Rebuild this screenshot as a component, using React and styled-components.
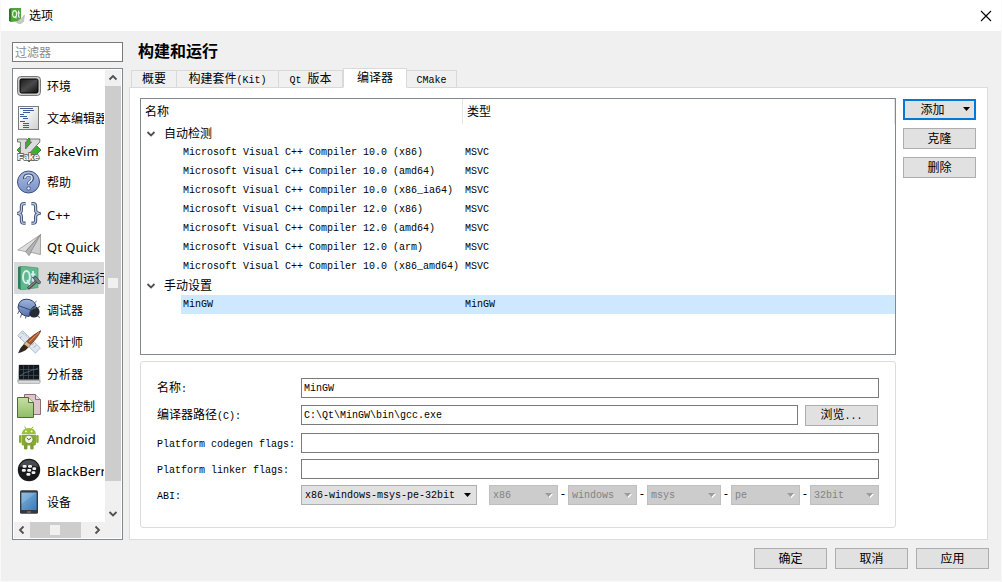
import { Fragment, useState } from "react";
import styled, { createGlobalStyle, css } from "styled-components";

const BUILD_TABS = [
  { id: "overview", label: "概要", width: 46 },
  { id: "kits", label: "构建套件", latinAfter: "(Kit)", width: 102 },
  { id: "versions", latinBefore: "Qt ", label: "版本", width: 64 },
  { id: "compilers", label: "编译器", width: 64 },
  { id: "cmake", latinBefore: "CMake", label: "", width: 50 },
];

const TOOLCHAINS = [
  {
    group: "自动检测",
    items: [
      { id: 1, name: "Microsoft Visual C++ Compiler 10.0 (x86)", type: "MSVC" },
      { id: 2, name: "Microsoft Visual C++ Compiler 10.0 (amd64)", type: "MSVC" },
      { id: 3, name: "Microsoft Visual C++ Compiler 10.0 (x86_ia64)", type: "MSVC" },
      { id: 4, name: "Microsoft Visual C++ Compiler 12.0 (x86)", type: "MSVC" },
      { id: 5, name: "Microsoft Visual C++ Compiler 12.0 (amd64)", type: "MSVC" },
      { id: 6, name: "Microsoft Visual C++ Compiler 12.0 (arm)", type: "MSVC" },
      { id: 7, name: "Microsoft Visual C++ Compiler 10.0 (x86_amd64)", type: "MSVC" },
    ],
  },
  {
    group: "手动设置",
    items: [{ id: 8, name: "MinGW", type: "MinGW" }],
  },
];

const ABI_PARTS = [
  { label: "arch", value: "x86" },
  { label: "os", value: "windows" },
  { label: "flavor", value: "msys" },
  { label: "format", value: "pe" },
  { label: "width", value: "32bit" },
];

function QtLogo() {
  return (
    <svg width="16" height="16" viewBox="0 0 16 16" aria-hidden="true">
      <path d="M0 1 L2 0 V14 L0 13 Z" fill="#2b7a1e" />
      <path d="M2 0 H12 V13 L2 14 Z" fill="#4fa53a" />
      <ellipse cx="5.6" cy="6" rx="2" ry="3.4" fill="none" stroke="#e8f5e2" strokeWidth="1.2" />
      <path d="M6 8 L7.4 10.4 M9.6 2.6 V8.4 Q9.6 9.4 10.8 9 M8.4 5 H11" fill="none" stroke="#e8f5e2" strokeWidth="1.1" />
      <path d="M15.5 7 L14.6 13.6 L11 16 L7.6 14.6 L10 11.4 L13 10 Z" fill="#c9c9c9" stroke="#a5a5a5" strokeWidth="0.5" />
    </svg>
  );
}

function EnvironmentIcon() {
  return (
    <>
      <defs>
        <linearGradient id="env" x1="0" y1="0" x2="1" y2="1">
          <stop offset="0" stopColor="#1a1a1a" />
          <stop offset="0.5" stopColor="#4a4a4a" />
          <stop offset="1" stopColor="#111" />
        </linearGradient>
      </defs>
      <rect x="0.6" y="2.6" width="22.8" height="18.8" rx="3" fill="#d4d4d2" stroke="#6d6d6d" />
      <rect x="3" y="5" width="18" height="14" rx="1.5" fill="url(#env)" stroke="#000" />
    </>
  );
}

function EditorIcon() {
  return (
    <>
      <defs>
        <linearGradient id="doc" x1="0" y1="0" x2="1" y2="1">
          <stop offset="0.3" stopColor="#f8f9fa" />
          <stop offset="1" stopColor="#cfcfcf" />
        </linearGradient>
      </defs>
      <rect x="1.5" y="0.5" width="20" height="23" fill="url(#doc)" stroke="#7b7b7b" />
      <path
        d="M3 2.5h13M6 4.5h11M6 6.5h7M3 8.5h4M3 10.5h7M6 12.5h5M3 15.5h5M6 17.5h6M6 19.5h6M6 21.5h6"
        stroke="#3d5b94"
        fill="none"
      />
    </>
  );
}

function FakeVimIcon() {
  return (
    <>
      <path d="M12 0 L24 12 L12 24 L0 12 Z" fill="#3fb02c" stroke="#1f7a16" strokeWidth="0.8" />
      <path
        d="M0.5 1 H10 V4 H8.6 V11 L14.6 4 H13 V1 H22.8 V4 L9.5 18.5 H3.4 V4 H0.5 Z"
        fill="#dcdcdc"
        stroke="#6a6a6a"
        strokeWidth="0.9"
      />
      <text
        x="0.5"
        y="21.5"
        fontFamily="Liberation Sans, sans-serif"
        fontSize="9.5"
        fontWeight="700"
        fill="#fff"
        stroke="#6b6b6b"
        strokeWidth="1.8"
        paintOrder="stroke"
      >
        Fake
      </text>
    </>
  );
}

function HelpIcon() {
  return (
    <>
      <defs>
        <linearGradient id="help" x1="0" y1="0" x2="0" y2="1">
          <stop offset="0" stopColor="#a9bbe0" />
          <stop offset="1" stopColor="#7791c8" />
        </linearGradient>
      </defs>
      <circle cx="11.5" cy="12" r="11" fill="url(#help)" stroke="#3d4f7c" />
      <path
        d="M7.6 9 Q7.4 5 11.6 5 Q15.6 5 15.4 8.6 Q15.2 10.6 12.8 11.8 Q11.6 12.6 11.6 14.6"
        fill="none"
        stroke="#34476f"
        strokeWidth="3.2"
      />
      <path
        d="M7.8 8.6 Q7.8 5.2 11.6 5.2 Q15.2 5.2 15 8.6 Q14.8 10.4 12.6 11.6 Q11.6 12.4 11.6 14.2"
        fill="none"
        stroke="#e6ebf7"
        strokeWidth="1.6"
      />
      <circle cx="11.6" cy="18.4" r="1.7" fill="#e6ebf7" stroke="#34476f" strokeWidth="0.8" />
    </>
  );
}

function CppIcon() {
  const braces =
    "M8.6 1.6 H7 Q4.4 1.6 4.4 4.4 V8 Q4.4 10.6 1.4 11.4 Q4.4 12.2 4.4 14.8 V18.4 Q4.4 21.2 7 21.2 H8.6 M14.4 1.6 H16 Q18.6 1.6 18.6 4.4 V8 Q18.6 10.6 21.6 11.4 Q18.6 12.2 18.6 14.8 V18.4 Q18.6 21.2 16 21.2 H14.4";
  return (
    <>
      <path d={braces} fill="none" stroke="#465a7c" strokeWidth="3.2" />
      <path d={braces} fill="none" stroke="#c3d0e6" strokeWidth="1.1" />
    </>
  );
}

function QuickIcon() {
  return (
    <>
      <path d="M23.6 0.6 L0.8 16 L8.6 17.6 Z" fill="#dedede" stroke="#8e8e8e" strokeWidth="0.7" />
      <path d="M23.6 0.6 L8.6 17.6 L12 21.6 L14 18.4 Z" fill="#b4b4b4" stroke="#7d7d7d" strokeWidth="0.7" />
      <path d="M23.6 0.6 L13.6 18.2 L23.4 20.6 Z" fill="#cfcfcf" stroke="#888" strokeWidth="0.7" />
    </>
  );
}

function BuildIcon() {
  return (
    <>
      <path d="M1 1 L4 0 V24 L1 22.6 Z" fill="#2f7d5b" />
      <path d="M3.6 0 L21 2 V21.6 L3.6 24 Z" fill="#5fb98b" stroke="#3e9069" strokeWidth="0.6" />
      <ellipse cx="9.4" cy="11" rx="3.4" ry="6" fill="none" stroke="#d9eef2" strokeWidth="2" />
      <path d="M10 14 L13 19 M16 5 V14 Q16 16 18 15.6 M14 8.4 H18.4" stroke="#d9eef2" strokeWidth="1.8" fill="none" />
      <path d="M11 22.6 L20 14.6" stroke="#4b3c44" strokeWidth="2.8" />
      <path d="M11.4 22 L19.6 14.8" stroke="#94828a" strokeWidth="1.2" />
      <path d="M15.4 11.4 L19 10.6 L24 16.4 L22.4 18 L19.8 16.6 L17.4 13.6 Z" fill="#72838e" stroke="#37444c" strokeWidth="0.8" />
    </>
  );
}

function DebuggerIcon() {
  return (
    <>
      <defs>
        <linearGradient id="bug" x1="0" y1="0" x2="0" y2="1">
          <stop offset="0" stopColor="#9fb4de" />
          <stop offset="1" stopColor="#5872ac" />
        </linearGradient>
      </defs>
      <path
        d="M2 13 L0.6 16 M4.6 16 L3.4 19.6 M9 18 L8.6 20.6 M17.4 5 L19.6 3 M21 9.6 L23 8.4 M20.4 18 L23 19.6"
        stroke="#4a525e"
        strokeWidth="0.9"
        fill="none"
      />
      <ellipse cx="17" cy="13.8" rx="5.6" ry="5.8" fill="#262c36" />
      <path
        d="M1 9.6 Q1.6 1.2 9.6 1.2 Q16.6 1.4 19 7.4 Q12.6 9.4 12.2 18.4 Q3.4 18.4 1 9.6 Z"
        fill="url(#bug)"
        stroke="#2d4069"
      />
      <path d="M1.4 7.6 L13.4 12" stroke="#2d4069" strokeWidth="0.9" />
      <path d="M14.4 12 Q16 9.4 19 9.8" stroke="#7c8694" strokeWidth="1" fill="none" />
    </>
  );
}

function DesignerIcon() {
  return (
    <>
      <path d="M0.6 5.6 L5.6 0.6 L23.4 18 L18.4 23.2 Z" fill="#dde5ee" stroke="#a5b2c2" strokeWidth="0.8" />
      <path
        d="M5 2.6 L6.8 4.4 M8.4 5 L9.6 6.2 M11 7.4 L12.6 9 M14.6 15 L16.6 13 M17 17.4 L19 15.4 M3 8 L4.4 6.6"
        stroke="#8494aa"
        strokeWidth="0.8"
      />
      <path d="M23.8 0.6 Q22 6 13.6 14.6 L9.4 11.4 Q17 4 23.8 0.6 Z" fill="#a9562c" stroke="#5a2b14" strokeWidth="0.7" />
      <path d="M22 2.4 L12 12" stroke="#e39a68" strokeWidth="1" />
      <path d="M9.4 11.4 L13.6 14.6 L11.2 17.6 L6.8 14.2 Z" fill="#d8b890" stroke="#6a5131" strokeWidth="0.6" />
      <path d="M6.8 14.2 L11.2 17.6 Q8 22 1 23.2 Q3 17.4 6.8 14.2 Z" fill="#33261c" />
    </>
  );
}

function AnalyzerIcon() {
  return (
    <>
      <path d="M2 3 H22 L23 20 H1 Z" fill="#c9cbcd" stroke="#96999c" strokeWidth="0.7" />
      <rect x="2" y="3" width="20" height="14.6" fill="#14181c" />
      <path d="M2.4 7.5h19M2.4 13.5h19M6.5 3.4v14M11.5 3.4v14M16.5 3.4v14" stroke="#44606b" strokeWidth="0.6" />
      <path d="M3 14 L8 10.6 L12 9.6 L15 8 L18 7.6 L21 6" fill="none" stroke="#4d7380" strokeWidth="0.8" />
      <path d="M1 18.4 H23 V20.6 Q23 21.4 22 21.4 H2 Q1 21.4 1 20.6 Z" fill="#d9dadb" stroke="#8b8e90" strokeWidth="0.6" />
    </>
  );
}

function VersionIcon() {
  return (
    <>
      <defs>
        <linearGradient id="vcs" x1="0" y1="0" x2="0" y2="1">
          <stop offset="0" stopColor="#c8dfa4" />
          <stop offset="1" stopColor="#8fbd68" />
        </linearGradient>
      </defs>
      <path d="M7.5 0.5 H18.5 L23.5 5.5 V20.5 H7.5 Z" fill="#dcc6cb" stroke="#8b6f76" />
      <path d="M18.5 0.5 V5.5 H23.5" fill="#efe1e4" stroke="#8b6f76" />
      <path d="M0.5 3.5 H11.5 L16.5 8.5 V23.5 H0.5 Z" fill="url(#vcs)" stroke="#4e6b36" />
      <path d="M11.5 3.5 V8.5 H16.5" fill="#e3f0cf" stroke="#4e6b36" />
    </>
  );
}

function AndroidIcon() {
  return (
    <>
      <path d="M7.6 0.6 L9.2 3 M16 0.6 L14.4 3" stroke="#8fb52c" strokeWidth="1" />
      <path d="M4.6 8 Q5.4 2 11.8 2 Q18.2 2 19 8 Z" fill="#9bc03a" />
      <circle cx="9" cy="5.4" r="0.9" fill="#fff" />
      <circle cx="14.6" cy="5.4" r="0.9" fill="#fff" />
      <path d="M4.6 8.8 H19 V18 Q19 19.4 17.6 19.4 H6 Q4.6 19.4 4.6 18 Z" fill="#86ab2f" />
      <rect x="2" y="9" width="2.4" height="8" rx="1.2" fill="#86ab2f" />
      <rect x="19.2" y="9" width="2.4" height="8" rx="1.2" fill="#86ab2f" />
      <rect x="7" y="18" width="3.4" height="5.6" rx="1.4" fill="#7d9e34" />
      <rect x="13.2" y="18" width="3.4" height="5.6" rx="1.4" fill="#7d9e34" />
      <circle cx="11.8" cy="13.4" r="4.2" fill="#eef3e2" stroke="#5f7d22" strokeWidth="0.7" />
      <path d="M9.8 12 L11.8 13.8 L14.2 11.8" stroke="#4e5b3a" strokeWidth="1" fill="none" />
    </>
  );
}

function BlackBerryIcon() {
  return (
    <>
      <circle cx="12" cy="12" r="11.2" fill="#17191b" />
      <path d="M2.4 9 Q5 2 12 2 Q19 2 21.6 9 Q12 6 2.4 9 Z" fill="#4a4d50" />
      <g fill="#f2f2f2">
        <rect x="5.6" y="7" width="4" height="2.8" rx="1.2" />
        <rect x="11" y="7" width="4" height="2.8" rx="1.2" />
        <rect x="4.8" y="11" width="4" height="2.8" rx="1.2" />
        <rect x="10.2" y="11" width="4" height="2.8" rx="1.2" />
        <rect x="15.4" y="9.2" width="3.8" height="2.8" rx="1.2" />
        <rect x="14.6" y="13.2" width="3.8" height="2.8" rx="1.2" />
        <rect x="9.4" y="15" width="4" height="2.8" rx="1.2" />
      </g>
    </>
  );
}

function DeviceIcon() {
  return (
    <>
      <defs>
        <linearGradient id="dev" x1="0" y1="0" x2="1" y2="1">
          <stop offset="0" stopColor="#7fb2dc" />
          <stop offset="0.5" stopColor="#5b97cb" />
          <stop offset="1" stopColor="#3f7cb4" />
        </linearGradient>
      </defs>
      <rect x="3" y="0.2" width="18" height="23.6" rx="1.6" fill="#33393f" />
      <rect x="4.4" y="2.6" width="15.2" height="17.4" fill="url(#dev)" />
      <path d="M4.4 2.6 H19.6 L4.4 14 Z" fill="#ffffff" opacity="0.15" />
      <path d="M10 22 H14" stroke="#9aa1a8" strokeWidth="0.8" />
    </>
  );
}

const CATEGORIES = [
  { id: "env", label: "环境", Icon: EnvironmentIcon },
  { id: "editor", label: "文本编辑器", Icon: EditorIcon },
  { id: "fakevim", label: "FakeVim", latin: true, Icon: FakeVimIcon },
  { id: "help", label: "帮助", Icon: HelpIcon },
  { id: "cpp", label: "C++", latin: true, Icon: CppIcon },
  { id: "quick", label: "Qt Quick", latin: true, Icon: QuickIcon },
  { id: "build", label: "构建和运行", Icon: BuildIcon },
  { id: "debugger", label: "调试器", Icon: DebuggerIcon },
  { id: "designer", label: "设计师", Icon: DesignerIcon },
  { id: "analyzer", label: "分析器", Icon: AnalyzerIcon },
  { id: "vcs", label: "版本控制", Icon: VersionIcon },
  { id: "android", label: "Android", latin: true, Icon: AndroidIcon },
  { id: "blackberry", label: "BlackBerry", latin: true, Icon: BlackBerryIcon },
  { id: "devices", label: "设备", Icon: DeviceIcon },
];

const CHEVRONS = {
  up: "M1.5 6.5 L5 3 L8.5 6.5",
  down: "M1.5 3 L5 6.5 L8.5 3",
  left: "M6.5 1.5 L3 5 L6.5 8.5",
  right: "M3.5 1.5 L7 5 L3.5 8.5",
};

function Chevron({ dir }) {
  return (
    <svg width="10" height="10" viewBox="0 0 10 10" aria-hidden="true">
      <path d={CHEVRONS[dir]} fill="none" stroke="#505050" strokeWidth="1.8" />
    </svg>
  );
}

function Combo({ id, label, value, disabled }) {
  return (
    <ComboBox>
      <ComboSelect id={id} aria-label={label} disabled={disabled} defaultValue={value}>
        <option value={value}>{value}</option>
      </ComboSelect>
      <ComboArrow width="8" height="5" viewBox="0 0 8 5" aria-hidden="true">
        {disabled && <path d="M1 1 H8 L4.5 5 Z" fill="#fff" />}
        <path d="M0 0 H7 L3.5 4 Z" fill={disabled ? "#9a9a9a" : "#000"} />
      </ComboArrow>
    </ComboBox>
  );
}

function App() {
  const [category, setCategory] = useState("build");
  const [tab, setTab] = useState("compilers");
  const [selected, setSelected] = useState(8);
  const [filter, setFilter] = useState("");

  return (
    <Window>
      <GlobalStyle />
      <TitleBar>
        <QtLogo />
        <WindowTitle>选项</WindowTitle>
        <CloseButton aria-label="关闭">
          <svg width="12" height="12" viewBox="0 0 12 12" aria-hidden="true">
            <path d="M1 1 L11 11 M11 1 L1 11" stroke="#000" strokeWidth="1.1" />
          </svg>
        </CloseButton>
      </TitleBar>

      <Body>
        <Sidebar>
          <FilterInput
            aria-label="过滤器"
            placeholder="过滤器"
            value={filter}
            onChange={(e) => setFilter(e.target.value)}
          />
          <CategoryBox>
            <CategoryList>
              {CATEGORIES.filter((c) => c.label.includes(filter)).map(({ id, label, latin, Icon }) => (
                <CategoryItem key={id} $active={id === category} onClick={() => setCategory(id)}>
                  <svg width="24" height="24" viewBox="0 0 24 24" aria-hidden="true">
                    <Icon />
                  </svg>
                  <CategoryLabel $latin={latin}>{label}</CategoryLabel>
                </CategoryItem>
              ))}
            </CategoryList>
            <ScrollBar $vertical>
              <ScrollButton aria-label="向上">
                <Chevron dir="up" />
              </ScrollButton>
              <ScrollTrack $vertical>
                <ScrollThumb $size={94}>
                  <ThumbGrip />
                </ScrollThumb>
              </ScrollTrack>
              <ScrollButton aria-label="向下">
                <Chevron dir="down" />
              </ScrollButton>
            </ScrollBar>
            <ScrollBar>
              <ScrollButton aria-label="向左">
                <Chevron dir="left" />
              </ScrollButton>
              <ScrollTrack>
                <ScrollThumb $size={86}>
                  <ThumbGrip />
                </ScrollThumb>
              </ScrollTrack>
              <ScrollButton aria-label="向右">
                <Chevron dir="right" />
              </ScrollButton>
            </ScrollBar>
            <ScrollCorner />
          </CategoryBox>
        </Sidebar>

        <Main>
          <PageTitle>构建和运行</PageTitle>
          <TabBar role="tablist">
            {BUILD_TABS.map((t) => (
              <Tab
                key={t.id}
                role="tab"
                aria-selected={t.id === tab}
                $active={t.id === tab}
                $width={t.width}
                onClick={() => setTab(t.id)}
              >
                {t.latinBefore && <Mono>{t.latinBefore}</Mono>}
                {t.label}
                {t.latinAfter && <Mono>{t.latinAfter}</Mono>}
              </Tab>
            ))}
          </TabBar>

          <TabPage>
            <Columns>
              <TreeBox>
                <Tree>
                  <colgroup>
                    <NameCol />
                    <col />
                  </colgroup>
                  <thead>
                    <tr>
                      <HeadCell>名称</HeadCell>
                      <HeadCell>类型</HeadCell>
                    </tr>
                  </thead>
                  <tbody>
                    {TOOLCHAINS.map(({ group, items }) => (
                      <Fragment key={group}>
                        <tr>
                          <TreeCell colSpan={2}>
                            <GroupLabel>
                              <Chevron dir="down" />
                              {group}
                            </GroupLabel>
                          </TreeCell>
                        </tr>
                        {items.map((item) => (
                          <tr key={item.id} onClick={() => setSelected(item.id)}>
                            <TreeCell>
                              <ItemName $selected={item.id === selected}>{item.name}</ItemName>
                            </TreeCell>
                            <TreeCell>
                              <ItemType $selected={item.id === selected}>{item.type}</ItemType>
                            </TreeCell>
                          </tr>
                        ))}
                      </Fragment>
                    ))}
                  </tbody>
                </Tree>
              </TreeBox>
              <SideActions>
                <AddButton>
                  添加
                  <MenuArrow width="7" height="4" viewBox="0 0 7 4" aria-hidden="true">
                    <path d="M0 0 H7 L3.5 4 Z" fill="#000" />
                  </MenuArrow>
                </AddButton>
                <PushButton>克隆</PushButton>
                <PushButton>删除</PushButton>
              </SideActions>

              <DetailBox onSubmit={(e) => e.preventDefault()}>
                <FieldLabel htmlFor="name">
                  名称<Mono>:</Mono>
                </FieldLabel>
                <TextInput id="name" defaultValue="MinGW" />

                <FieldLabel htmlFor="path">
                  编译器路径<Mono>(C):</Mono>
                </FieldLabel>
                <PathRow>
                  <TextInput id="path" defaultValue="C:\Qt\MinGW\bin\gcc.exe" />
                  <PushButton type="button">
                    浏览<Mono>...</Mono>
                  </PushButton>
                </PathRow>

                <FieldLabel htmlFor="codegen">
                  <Mono>Platform codegen flags:</Mono>
                </FieldLabel>
                <TextInput id="codegen" />

                <FieldLabel htmlFor="linker">
                  <Mono>Platform linker flags:</Mono>
                </FieldLabel>
                <TextInput id="linker" />

                <FieldLabel htmlFor="abi">
                  <Mono>ABI:</Mono>
                </FieldLabel>
                <AbiRow>
                  <Combo id="abi" value="x86-windows-msys-pe-32bit" />
                  <AbiParts>
                    {ABI_PARTS.map((part, i) => (
                      <Fragment key={part.label}>
                        {i > 0 && <Dash>-</Dash>}
                        <Combo label={part.label} value={part.value} disabled />
                      </Fragment>
                    ))}
                  </AbiParts>
                </AbiRow>
              </DetailBox>
            </Columns>
          </TabPage>
        </Main>
      </Body>

      <Footer>
        <PushButton>确定</PushButton>
        <PushButton>取消</PushButton>
        <PushButton>应用</PushButton>
      </Footer>
    </Window>
  );
}

export default App;

const GlobalStyle = createGlobalStyle`
  * {
    box-sizing: border-box;
  }

  body {
    margin: 0;
    background: #f0f0f0;
    color: #000;
    font-family: "Noto Sans", "Noto Sans CJK SC", sans-serif;
    font-size: 12px;
    line-height: 16px;
  }

  button, input, select {
    font: inherit;
    color: inherit;
    margin: 0;
    padding: 0;
    border-radius: 0;
  }

  svg {
    display: block;
    flex-shrink: 0;
  }
`;

const mono = css`
  font-family: "Liberation Mono", "Noto Sans CJK SC", monospace;
  font-size: 10px;
`;

const Mono = styled.span`
  ${mono}
  white-space: pre;
`;

const Window = styled.div`
  display: flex;
  flex-direction: column;
  min-height: 100vh;
  border: 1px solid #f9f9f9;
  border-top: none;
`;

const TitleBar = styled.header`
  display: flex;
  align-items: center;
  gap: 4px;
  height: 31px;
  padding: 0 9px 0 8px;
  background: #fff;
`;

const WindowTitle = styled.span`
  flex: 1;
`;

const CloseButton = styled.button`
  border: none;
  background: none;
`;

const Body = styled.div`
  flex: 1;
  display: flex;
  gap: 6px;
  padding: 11px 13px 0 11px;
`;

const Sidebar = styled.nav`
  display: flex;
  flex-direction: column;
  gap: 6px;
  width: 111px;
  flex-shrink: 0;
`;

const FilterInput = styled.input`
  width: 100%;
  height: 20px;
  padding: 0 2px;
  border: 1px solid #7a7a7a;
  background: #fff;

  &::placeholder {
    color: #8c8c8c;
  }
`;

const CategoryBox = styled.div`
  flex: 1;
  display: grid;
  grid-template-columns: 1fr 16px;
  grid-template-rows: 1fr 16px;
  padding: 1px;
  border: 1px solid #828790;
  background: #fff;
`;

const CategoryList = styled.div`
  min-width: 0;
  overflow: hidden;
`;

const CategoryItem = styled.button`
  display: flex;
  align-items: center;
  gap: 6px;
  width: 100%;
  height: 32px;
  padding: 0 0 0 3px;
  border: none;
  border-right: 1px solid #fff;
  overflow: hidden;
  white-space: nowrap;
  text-align: left;
  background: ${({ $active }) => ($active ? "#d9d9d9" : "#fff")};
`;

const CategoryLabel = styled.span`
  padding-top: 2px;
  font-size: ${({ $latin }) => ($latin ? 13 : 12)}px;
`;

const ScrollBar = styled.div`
  display: flex;
  flex-direction: ${({ $vertical }) => ($vertical ? "column" : "row")};
  background: #f0f0f0;
`;

const ScrollButton = styled.button`
  display: flex;
  align-items: center;
  justify-content: center;
  width: 16px;
  height: 16px;
  border: none;
  background: none;
`;

const ScrollTrack = styled.div`
  flex: 1;
  display: flex;
  flex-direction: ${({ $vertical }) => ($vertical ? "column" : "row")};
`;

const ScrollThumb = styled.div`
  flex: 0 0 ${({ $size }) => $size}%;
  display: flex;
  align-items: center;
  justify-content: center;
  background: #cdcdcd;
`;

const ThumbGrip = styled.span`
  width: 10px;
  height: 10px;
  background: #f0f0f0;
`;

const ScrollCorner = styled.div`
  background: #f0f0f0;
`;

const Main = styled.main`
  flex: 1;
  min-width: 0;
  display: flex;
  flex-direction: column;
`;

const PageTitle = styled.h1`
  margin: 0;
  padding-left: 9px;
  height: 26px;
  font-size: 16px;
  line-height: 18px;
  font-weight: 700;
`;

const TabBar = styled.div`
  display: flex;
  align-items: flex-end;
  padding-left: 2px;
  margin-bottom: -1px;
`;

const Tab = styled.button`
  position: relative;
  width: ${({ $width }) => $width}px;
  height: ${({ $active }) => ($active ? 20 : 18)}px;
  border: 1px solid #d9d9d9;
  border-left-width: ${({ $active }) => ($active ? 1 : 0)}px;
  border-bottom-color: ${({ $active }) => ($active ? "#fff" : "#d9d9d9")};
  background: ${({ $active }) => ($active ? "#fff" : "#f0f0f0")};
  line-height: 16px;
  white-space: nowrap;

  &:first-child {
    border-left-width: 1px;
  }
`;

const TabPage = styled.section`
  flex: 1;
  display: flex;
  padding: 10px 11px 11px 10px;
  border: 1px solid #dcdcdc;
  background: #fff;
`;

const Columns = styled.div`
  flex: 1;
  min-width: 0;
  display: grid;
  grid-template-columns: minmax(0, 1fr) 73px;
  grid-template-rows: 1fr auto;
  gap: 6px 7px;
`;

const TreeBox = styled.div`
  border: 1px solid #828790;
  overflow: auto;
`;

const Tree = styled.table`
  width: 100%;
  table-layout: fixed;
  border-collapse: separate;
  border-spacing: 0;
`;

const NameCol = styled.col`
  width: 322px;
`;

const HeadCell = styled.th`
  height: 25px;
  padding: 0 4px;
  border-right: 1px solid #e5e5e5;
  font-weight: 400;
  text-align: left;
`;

const TreeCell = styled.td`
  height: 19px;
  padding: 0;
`;

const GroupLabel = styled.div`
  display: flex;
  align-items: center;
  gap: 8px;
  padding-left: 5px;
`;

const TreeText = styled.div`
  ${mono}
  padding-left: 2px;
  line-height: 19px;
  white-space: nowrap;
  background: ${({ $selected }) => ($selected ? "#cde8ff" : "transparent")};
`;

const ItemName = styled(TreeText)`
  margin-left: 40px;
`;

const ItemType = styled(TreeText)``;

const SideActions = styled.div`
  display: flex;
  flex-direction: column;
  gap: 8px;
  padding-top: 1px;
`;

const PushButton = styled.button`
  width: 73px;
  height: 21px;
  border: 1px solid #adadad;
  background: #e1e1e1;
  line-height: 16px;
  flex-shrink: 0;
`;

const AddButton = styled(PushButton)`
  position: relative;
  padding-right: 14px;
  border: 2px solid #0078d7;
`;

const MenuArrow = styled.svg`
  position: absolute;
  top: 6px;
  right: 4px;
`;

const DetailBox = styled.form`
  display: grid;
  grid-template-columns: 138px minmax(0, 1fr);
  grid-template-rows: 21px 22px 20px 20px 20px;
  gap: 6px;
  align-items: start;
  padding: 16px 16px 22px;
  border: 1px solid #dcdcdc;
  border-radius: 3px;
`;

const FieldLabel = styled.label`
  line-height: 20px;
  white-space: nowrap;
`;

const TextInput = styled.input`
  ${mono}
  width: 100%;
  min-width: 0;
  height: 20px;
  padding: 0 2px;
  border: 1px solid #7a7a7a;
  background: #fff;
`;

const PathRow = styled.div`
  display: flex;
  gap: 7px;
  padding-right: 1px;
`;

const AbiRow = styled.div`
  display: grid;
  grid-template-columns: 176px minmax(0, 1fr);
  gap: 12px;
`;

const AbiParts = styled.div`
  display: grid;
  grid-template-columns: 69fr 10px 69fr 10px 74fr 10px 69fr 10px 69fr;
`;

const Dash = styled.span`
  line-height: 18px;
  text-align: center;
`;

const ComboBox = styled.div`
  position: relative;
  min-width: 0;
`;

const ComboSelect = styled.select`
  ${mono}
  display: block;
  appearance: none;
  width: 100%;
  height: 20px;
  padding: 2px 16px 0 3px;
  border: 1px solid #adadad;
  background: #e1e1e1;
  opacity: 1;

  &:disabled {
    border-color: #bfbfbf;
    background: #cccccc;
    color: #838383;
  }
`;

const ComboArrow = styled.svg`
  position: absolute;
  top: 8px;
  right: 5px;
  pointer-events: none;
`;

const Footer = styled.footer`
  display: flex;
  justify-content: flex-end;
  gap: 8px;
  padding: 8px 12px 12px;
`;
